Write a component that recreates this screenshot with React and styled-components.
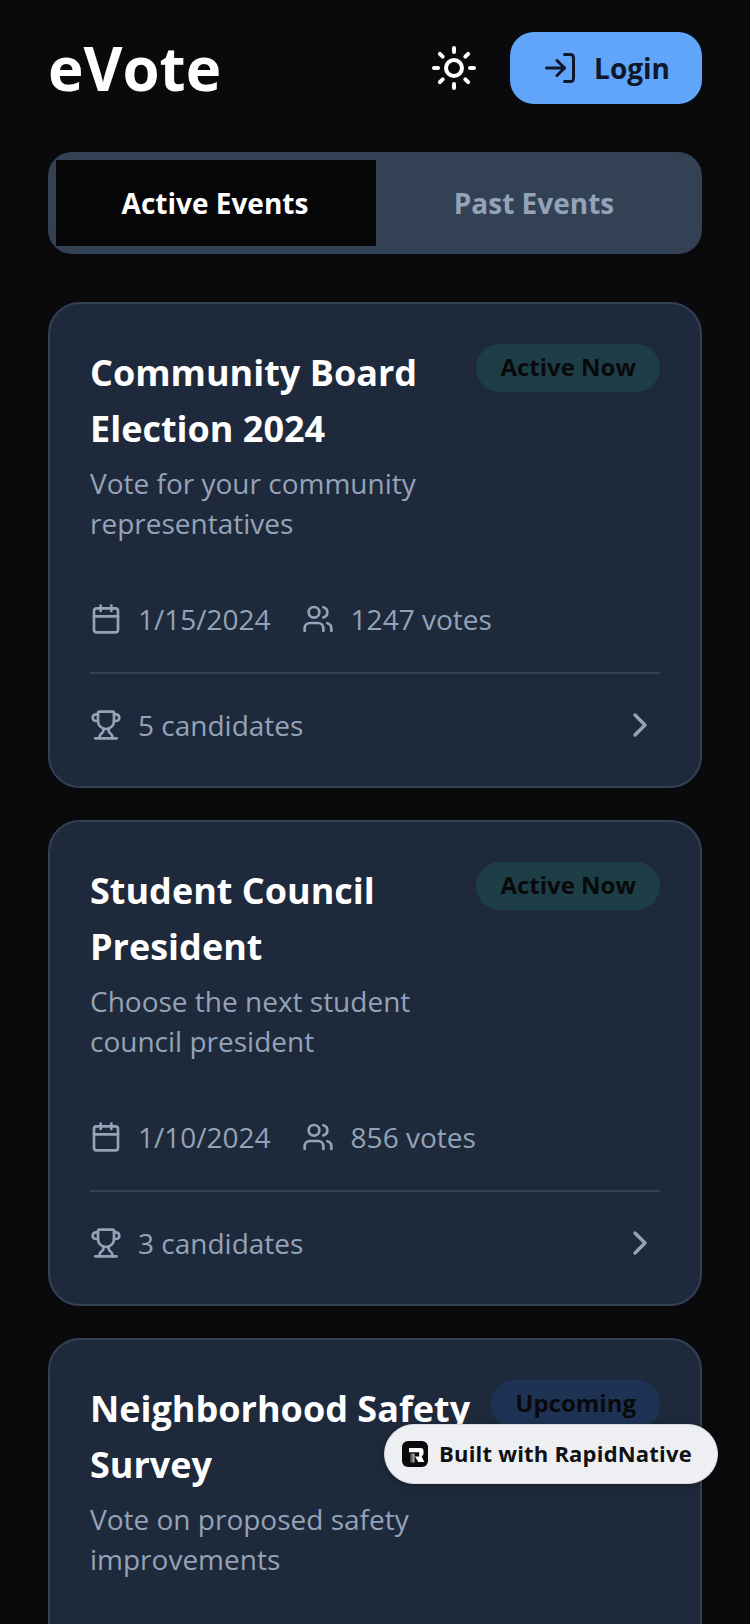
import React from 'react'
import styled, { createGlobalStyle } from 'styled-components'
import { Sun, LogIn, Calendar, Users, Trophy, ChevronRight } from 'lucide-react'

const Global = createGlobalStyle`
    html, body {
        margin: 0;
        padding: 0;
        background: #0a0a0d;
        height: 1624px;
        overflow: hidden;
    }
    * {
        box-sizing: border-box;
    }
`

const Page = styled.div`
    position: relative;
    width: 750px;
    height: 1624px;
    overflow: hidden;
    background: #0a0a0d;
    font-family: "Open Sans", sans-serif;
    padding: 32px 48px 0;
`

const Header = styled.header`
    display: flex;
    align-items: center;
    justify-content: space-between;
    height: 72px;
    margin-bottom: 48px;
`

const Logo = styled.h1`
    margin: 0;
    font-size: 60px;
    line-height: 72px;
    font-weight: 700;
    color: #ffffff;
`

const HeaderActions = styled.div`
    display: flex;
    align-items: center;
    gap: 32px;
`

const LoginButton = styled.button`
    display: flex;
    align-items: center;
    gap: 16px;
    height: 72px;
    padding: 0 32px;
    border: none;
    border-radius: 24px;
    background: #60a5fa;
    color: #0f172a;
    font-family: inherit;
    font-size: 28px;
    font-weight: 700;
`

const Tabs = styled.div`
    display: flex;
    height: 102px;
    padding: 8px;
    margin-bottom: 48px;
    border-radius: 24px;
    background: #334155;
`

const Tab = styled.div`
    flex: ${({ $active }) => ($active ? '0 0 320px' : '1')};
    display: flex;
    align-items: center;
    justify-content: center;
    padding-right: 2px;
    font-size: 28px;
    font-weight: 700;
    background: ${({ $active }) => ($active ? '#060608' : 'transparent')};
    color: ${({ $active }) => ($active ? '#ffffff' : '#94a3b8')};
`

const CardList = styled.div`
    display: flex;
    flex-direction: column;
    gap: 32px;
`

const Card = styled.article`
    flex-shrink: 0;
    padding: 40px;
    border: 2px solid #334155;
    border-radius: 32px;
    background: #1e293b;
`

const CardTop = styled.div`
    display: flex;
    align-items: flex-start;
    justify-content: space-between;
    gap: 16px;
    margin-bottom: 56px;
`

const CardText = styled.div`
    flex: 1;
    min-width: 0;
`

const Title = styled.h2`
    margin: 1px 0 6px;
    font-size: 36px;
    line-height: 56px;
    font-weight: 700;
    color: #ffffff;
`

const Description = styled.p`
    margin: 0;
    font-size: 28px;
    line-height: 40px;
    color: #94a3b8;
`

const Badge = styled.span`
    flex-shrink: 0;
    height: 48px;
    padding: 0 24px;
    border-radius: 24px;
    font-size: 24px;
    line-height: 46px;
    font-weight: 700;
    color: #09090b;
    background: ${({ $tone }) => ($tone === 'upcoming' ? '#1e3354' : '#1e3e47')};
`

const MetaRow = styled.div`
    display: flex;
    align-items: center;
    gap: 31px;
    margin-bottom: 33px;
`

const MetaItem = styled.div`
    display: flex;
    align-items: center;
    gap: ${({ $gap }) => $gap || 16}px;
    font-size: 28px;
    line-height: 40px;
    color: #94a3b8;
`

const CardFooter = styled.div`
    display: flex;
    align-items: center;
    justify-content: space-between;
    padding-top: 31px;
    padding-bottom: 1px;
    border-top: 2px solid #334155;
`

const BuiltWith = styled.div`
    position: absolute;
    left: 384px;
    top: 1424px;
    display: flex;
    align-items: center;
    gap: 11px;
    width: 334px;
    height: 60px;
    padding: 0 17px 1px;
    border-radius: 30px;
    border: 1px solid #d9dbe0;
    background: #eeeff3;
    box-shadow: 0 2px 8px rgba(0, 0, 0, 0.25);
    color: #111114;
    font-size: 22px;
    font-weight: 700;
    letter-spacing: 0.2px;
    white-space: nowrap;
`

const BuiltText = styled.span`
    margin-bottom: 1px;
`

const events = [
    {
        title: 'Community Board Election 2024',
        description: 'Vote for your community representatives',
        status: 'Active Now',
        date: '1/15/2024',
        votes: 1247,
        candidates: 5,
    },
    {
        title: 'Student Council President',
        description: 'Choose the next student council president',
        status: 'Active Now',
        date: '1/10/2024',
        votes: 856,
        candidates: 3,
    },
    {
        title: 'Neighborhood Safety Survey',
        description: 'Vote on proposed safety improvements',
        status: 'Upcoming',
        tone: 'upcoming',
        date: '2/1/2024',
        votes: 0,
        candidates: 4,
    },
]

const RapidLogo = () => (
    <svg width="26" height="26" viewBox="0 0 26 26" style={{ flexShrink: 0 }}>
        <defs>
            <linearGradient id="stemFade" x1="0" y1="0" x2="1" y2="0">
                <stop offset="0" stopColor="#ffffff" stopOpacity="0.15" />
                <stop offset="1" stopColor="#ffffff" stopOpacity="0.75" />
            </linearGradient>
        </defs>
        <rect width="26" height="26" rx="6" fill="#0b0b0d" />
        <path d="M7 7h11.5q3 0 3 3v2.5q0 2-2 2.6l2.8 6h-6L13 15.5h4.2v-4.2H7z" fill="#ffffff" />
        <path d="M8 12.5h4.5v9H8z" fill="url(#stemFade)" />
    </svg>
)

const EventCard = ({ event }) => (
    <Card>
        <CardTop>
            <CardText>
                <Title>{event.title}</Title>
                <Description>{event.description}</Description>
            </CardText>
            <Badge $tone={event.tone}>{event.status}</Badge>
        </CardTop>
        <MetaRow>
            <MetaItem>
                <Calendar size={32} />
                {event.date}
            </MetaItem>
            <MetaItem $gap={17}>
                <Users size={32} />
                {event.votes} votes
            </MetaItem>
        </MetaRow>
        <CardFooter>
            <MetaItem>
                <Trophy size={32} />
                {event.candidates} candidates
            </MetaItem>
            <ChevronRight size={40} color="#94a3b8" />
        </CardFooter>
    </Card>
)

const App = () => (
    <Page>
        <Global />
        <Header>
            <Logo>eVote</Logo>
            <HeaderActions>
                <Sun size={48} color="#ffffff" />
                <LoginButton>
                    <LogIn size={36} />
                    Login
                </LoginButton>
            </HeaderActions>
        </Header>
        <Tabs>
            <Tab $active>Active Events</Tab>
            <Tab>Past Events</Tab>
        </Tabs>
        <CardList>
            {events.map((event) => (
                <EventCard key={event.title} event={event} />
            ))}
        </CardList>
        <BuiltWith>
            <RapidLogo />
            <BuiltText>Built with RapidNative</BuiltText>
        </BuiltWith>
    </Page>
)

export default App
